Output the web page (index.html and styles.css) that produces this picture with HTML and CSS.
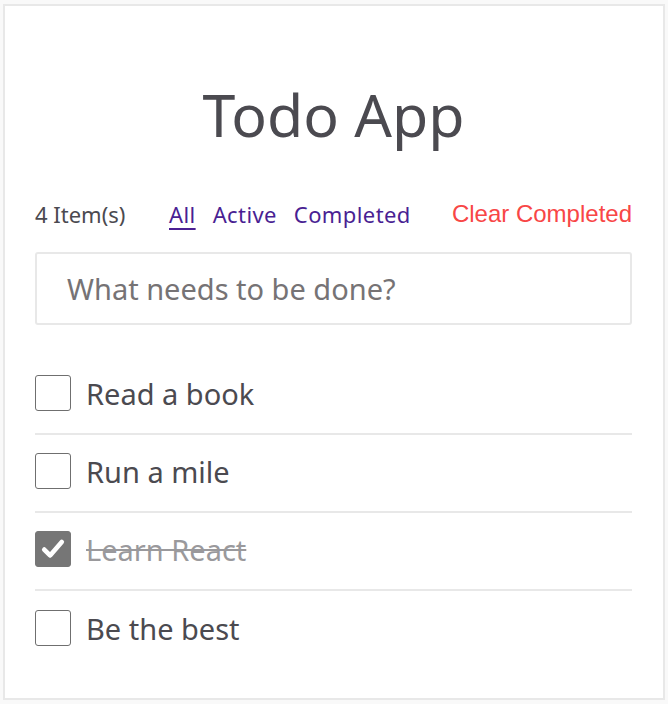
FILE: index.html
```html
<!DOCTYPE html>
<html>
<head>
<meta charset="utf-8">
<link rel="stylesheet" href="styles.css">
</head>
<body>
<div class="card">
  <h1 class="title">Todo App</h1>
  <div class="controls">
    <span class="count">4 Item(s)</span>
    <nav class="filters">
      <a class="filter current">All</a>
      <a class="filter">Active</a>
      <a class="filter">Completed</a>
    </nav>
    <button class="clear">Clear Completed</button>
  </div>
  <div class="new-todo">What needs to be done?</div>
  <ul class="list">
    <li class="item"><span class="box"></span><span class="label">Read a book</span></li>
    <li class="item"><span class="box"></span><span class="label">Run a mile</span></li>
    <li class="item done"><span class="box checked"><svg viewBox="0 0 24 24" width="28" height="28"><path d="M4.5 12.5l5 5L19.5 6" fill="none" stroke="#fff" stroke-width="4" stroke-linecap="round" stroke-linejoin="round"/></svg></span><span class="label">Learn React</span></li>
    <li class="item last"><span class="box"></span><span class="label">Be the best</span></li>
  </ul>
</div>
</body>
</html>
```
FILE: styles.css
```css
html, body { margin: 0; padding: 0; background: #f9f9f9; }
body { padding: 4px 3px 4px 3px; font-family: "Noto Sans", sans-serif; }
.card {
  background: #fff;
  border: 2px solid #e8e8e8;
  padding: 72px 31px 0 30px;
  height: 696px;
  box-sizing: border-box;
}
.title {
  margin: 0;
  text-align: center;
  font-size: 59px;
  font-weight: 400;
  color: #4b4a50;
  line-height: 72px;
}
.controls {
  display: flex;
  align-items: center;
  margin-top: 46px;
  height: 36px;
}
.count { font-size: 22px; color: #4b4a50; width: 134px; }
.filters { display: flex; gap: 17px; flex: 1; }
.filter { font-size: 22px; color: #4a1f93; letter-spacing: 0.4px; }
.filter.current { text-decoration: underline; text-decoration-thickness: 2px; text-underline-offset: 5px; }
.clear {
  border: 0; background: none; padding: 0;
  font-family: "Liberation Sans", Arial, sans-serif;
  font-size: 24px; color: #f84646;
}
.new-todo {
  margin-top: 20px;
  height: 73px;
  box-sizing: border-box;
  border: 2px solid #e8e8e8;
  border-radius: 3px;
  padding: 0 30px;
  display: flex;
  align-items: center;
  font-size: 29px;
  color: #767375;
}
.list { list-style: none; margin: 32px 0 0; padding: 0; }
.item {
  display: flex;
  align-items: center;
  height: 78px;
  padding-bottom: 4px;
  border-bottom: 2px solid #e8e8e8;
  box-sizing: border-box;
  gap: 15px;
}
.item.last { border-bottom: 0; }
.box {
  width: 36px; height: 36px; box-sizing: border-box;
  border: 1px solid #6f6f6f; border-radius: 3px; flex: none;
  display: flex; align-items: center; justify-content: center;
}
.box.checked { background: #767676; border-color: #767676; }
.label { font-size: 29px; color: #4b4a50; }
.done .label { color: #9a999c; text-decoration: line-through; }
```
